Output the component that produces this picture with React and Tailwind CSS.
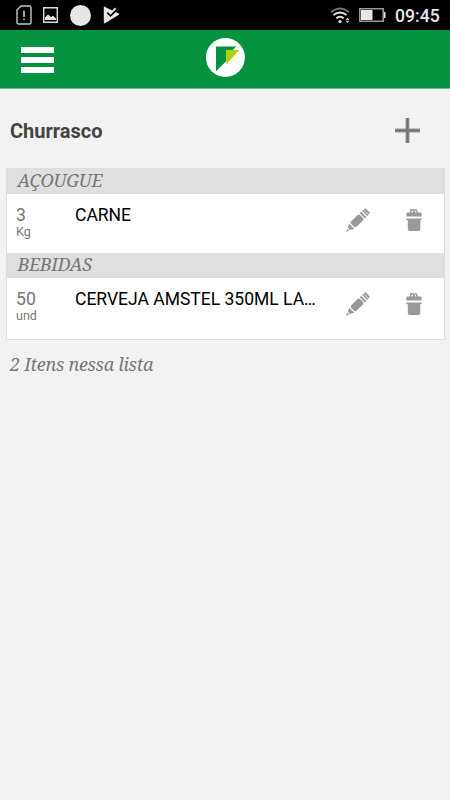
const sections = [
    { title: 'AÇOUGUE', titleClass: 'h-[25px] leading-[22px]', rowClass: 'h-[59px]', amount: '3', unit: 'Kg', name: 'CARNE' },
    { title: 'BEBIDAS', titleClass: 'h-[25px] leading-[23px]', rowClass: 'h-[61px]', amount: '50', unit: 'und', name: 'CERVEJA AMSTEL 350ML LA…' },
];

const Pencil = () => (
    <svg width="24" height="24" viewBox="0 0 24 24" fill="#999">
        <path d="M0 23.4L1.4 20.8L3 22.4L.6 23.8Z" />
        <path d="M1.8 19.8L3.2 15.8L8.3 20.7L4 22Z" />
        <path d="M5 13.4L11.6 7Q12.8 6 14 7.1L17 10.1Q18.1 11.3 17 12.4L10.4 18.8Q9.2 19.8 8 18.7L5 15.7Q4 14.5 5 13.4Z" />
        <path d="M13.8 5.2L15.2 3.8L20.4 9L19 10.4Z" />
        <path d="M16.1 2.9L17.3 1.7L22.5 6.9L21.3 8.1Z" />
        <path d="M17.6 1.4L19.5 .2L23.8 4.5L22.8 6.6Z" />
    </svg>
);

const Trash = () => (
    <svg width="16" height="24" viewBox="0 0 16 24">
        <path d="M4.7 5V1.9H10.2L11.6 5" fill="none" stroke="#999" strokeWidth="1.5" />
        <path d="M7 3H9V5H7Z" fill="#999" />
        <path d="M1.2 4.6H14.8L15.6 5.6V8.4H.3V5.6Z" fill="#999" />
        <path d="M.3 10.6H15.6V12.2H14.3V21Q14.3 23 12.3 23H3.8Q1.8 23 1.8 21V12.2H.3Z" fill="#999" />
    </svg>
);

const StatusBar = () => (
    <div className="h-[30px] bg-black flex items-center justify-between pl-4 pr-[10px] text-[#e6e6e6]">
        <div className="flex items-center">
            <svg width="16" height="20" viewBox="0 0 16 20">
                <path d="M5 1H13.5Q15 1 15 2.5V17.5Q15 19 13.5 19H2.5Q1 19 1 17.5V5Z" fill="none" stroke="#c8c8c8" strokeWidth="1.4" />
                <path d="M7.2 5.5H8.8V12H7.2ZM7.2 13.5H8.8V15H7.2Z" fill="#c8c8c8" />
            </svg>
            <svg className="ml-[11px]" width="15" height="16" viewBox="0 0 15 16">
                <path d="M.7 .7H14.3V15.3H.7Z" fill="none" stroke="#dedede" strokeWidth="1.4" />
                <path d="M2 13V10.5L5 7.5L8 10L10 8.7L13 11.5V13Z" fill="#e6e6e6" />
            </svg>
            <div className="ml-3 size-[21px] rounded-full bg-[#e6e6e6]" />
            <svg className="ml-[12px]" width="18" height="18" viewBox="0 0 18 18">
                <path d="M1.5 .7L15.8 7.6Q16.8 8.2 15.8 8.8L2 17.3Q.8 17.7 .8 16.3V1.2Q.8 .3 1.5 .7Z" fill="#e6e6e6" />
                <path d="M4.4 6.6L7.6 9.6L14 3.2" fill="none" stroke="#000" strokeWidth="2" />
                <path d="M5.4 5.2L7.6 7.4L12.6 2.2" fill="none" stroke="#e6e6e6" strokeWidth="1.8" />
            </svg>
        </div>
        <div className="flex items-center">
            <svg width="20" height="17" viewBox="0 0 20 17" fill="none">
                <path d="M1 5Q10 -2 19 5" stroke="#777" strokeWidth="1.8" />
                <path d="M3.5 8Q10 3 16.5 8" stroke="#e6e6e6" strokeWidth="2" />
                <path d="M6.3 11.2Q10 8.3 13.7 11.2" stroke="#e6e6e6" strokeWidth="2" />
                <circle cx="10" cy="14.5" r="1.6" fill="#e6e6e6" />
                <path d="M15.5 12.9L17.5 10.8L19.5 12.9ZM15.5 13.8H19.5L17.5 15.9Z" fill="#c8c8c8" />
            </svg>
            <svg className="ml-[9px]" width="27" height="14" viewBox="0 0 27 14">
                <path d="M.8 .8H24.2V13.2H.8Z" fill="none" stroke="#999" strokeWidth="1.6" />
                <path d="M2 2H13.5V12H2ZM25 4H26.5V10H25Z" fill="#e6e6e6" />
            </svg>
            <span className="ml-[9px] w-[45px] whitespace-nowrap text-[17.6px] leading-[30px] pt-px font-medium">09:45</span>
        </div>
    </div>
);

const Header = () => (
    <div className="h-[59px] bg-[#04923f] border-b border-[#7fb894] grid grid-cols-3 pl-[21px] pr-[20px]">
        <button className="w-[33px] pt-[17px] flex flex-col gap-[4px]">
            <span className="w-full h-[6px] bg-white" />
            <span className="w-full h-[6px] bg-white" />
            <span className="w-full h-[6px] bg-white" />
        </button>
        <svg className="justify-self-center mt-[7px]" width="40" height="40" viewBox="0 0 40 40">
            <circle cx="20.4" cy="20.5" r="19.5" fill="#fff" />
            <path d="M11 9.5H31.2L27.9 13H21.4V24L11 34.3Z" fill="#04923f" />
            <path d="M21.4 13H34.2L21.4 27.2Z" fill="#b4cd00" />
        </svg>
    </div>
);

const App = () => {
    return (
        <div className="w-full h-screen bg-[#f2f2f2] overflow-hidden font-[Roboto,sans-serif]">
            <StatusBar />
            <Header />

            <div className="h-[79px] pl-[10px] pr-[29px] pt-[4px] flex items-center justify-between">
                <h1 className="text-[20px] leading-[28px] pt-px font-bold text-[#444]">Churrasco</h1>
                <svg width="27" height="27" viewBox="0 0 27 27">
                    <path d="M1 13.5H26M13.5 1V26" stroke="#999" strokeWidth="4" />
                    <path d="M1 13.5H26M13.5 1V26" stroke="#707070" strokeWidth="2" />
                </svg>
            </div>

            <div className="ml-[6px] mr-[5px] border border-[#dedede] bg-white">
                {sections.map((section) => (
                    <div key={section.title}>
                        <div className={`bg-[#dfdfdf] pl-[10.5px] text-[18px] tracking-[-0.35px] text-[#777] italic font-['Noto_Serif','Droid_Serif','Liberation_Serif',serif] ${section.titleClass}`}>
                            {section.title}
                        </div>
                        <div className={`flex items-start pl-[9px] pr-[22px] ${section.rowClass}`}>
                            <div className="w-[59px] text-[#777] pt-[10px]">
                                <p className="text-[17.6px] leading-[22px] -mb-[2px]">{section.amount}</p>
                                <p className="text-[12.5px] leading-[15px]">{section.unit}</p>
                            </div>
                            <p className="w-[250px] pt-[10px] text-[17.5px] leading-[22px] text-black whitespace-nowrap">{section.name}</p>
                            <div className="ml-auto mt-[14px] flex gap-[36px]">
                                <Pencil />
                                <Trash />
                            </div>
                        </div>
                    </div>
                ))}
            </div>

            <p className="pl-[10px] pt-[12px] text-[18px] tracking-[-0.28px] leading-[24px] italic text-[#777] font-['Noto_Serif','Droid_Serif','Liberation_Serif',serif]">
                2 Itens nessa lista
            </p>
        </div>
    );
}

export default App;
